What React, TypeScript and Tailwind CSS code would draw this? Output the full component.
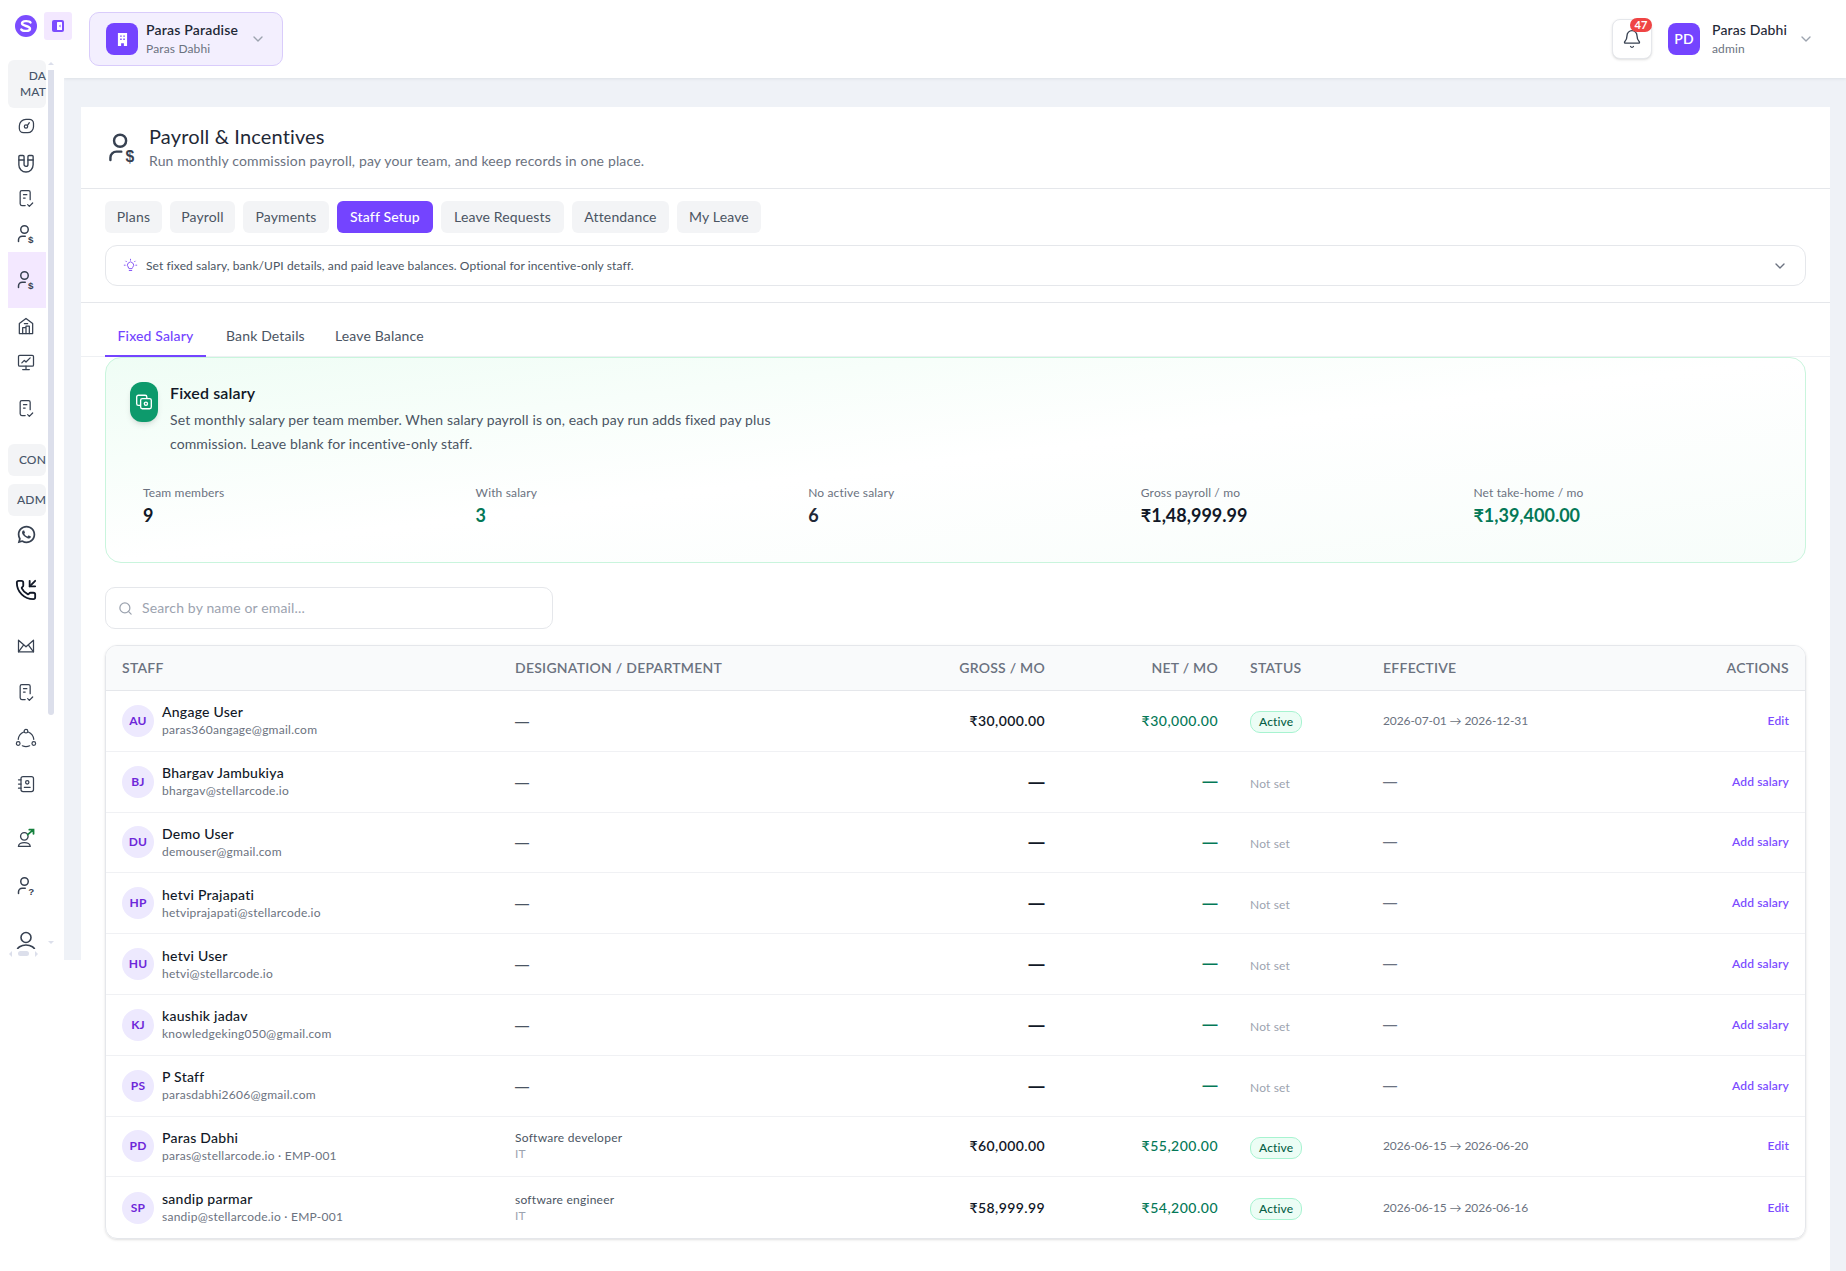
import type { ReactNode } from 'react';
import { Bell, ChevronDown, Magnet, PhoneIncoming, Search } from 'lucide-react';
import { RiWhatsappLine } from 'react-icons/ri';

function Ico({ children, className = 'w-5 h-5' }: { children: ReactNode; className?: string }) {
  return (
    <svg viewBox="0 0 24 24" fill="none" stroke="currentColor" strokeWidth="1.5" strokeLinecap="round" strokeLinejoin="round" className={className}>
      {children}
    </svg>
  );
}

function UserDollar({ className = 'w-[18px] h-[20px]' }: { className?: string }) {
  return (
    <svg viewBox="0 0 24 26" fill="none" stroke="currentColor" strokeWidth="2" strokeLinecap="round" className={className}>
      <circle cx="10" cy="7" r="5" />
      <path d="M2 23v-2a5 5 0 0 1 5-5h4" />
      <text x="14.5" y="25" fontSize="13" fontWeight="700" fill="currentColor" stroke="none" fontFamily="Liberation Sans, sans-serif">$</text>
    </svg>
  );
}

function DocCheck() {
  return (
    <Ico>
      <path d="M11 21H7a2 2 0 0 1-2-2V5a2 2 0 0 1 2-2h8a2 2 0 0 1 2 2v9" />
      <path d="M9 8h4M9 12h2M14 20l2 2 4-4" />
    </Ico>
  );
}

const navIcons: Record<string, ReactNode> = {
  gauge: (
    <Ico>
      <path d="M4 12a8 8 0 0 1 8-8h4a5 5 0 0 1 5 5v4a7 7 0 0 1-7 7h-5a5 5 0 0 1-5-5z" />
      <circle cx="12" cy="12.5" r="2" />
      <path d="M14 11l2-3" />
    </Ico>
  ),
  magnet: <Magnet className="w-[22px] h-[22px] rotate-[135deg]" strokeWidth={1.5} />,
  doc: <DocCheck />,
  user: <UserDollar />,
  home: (
    <Ico>
      <path d="M4 21V9l8-6 8 6v12z" />
      <path d="M8 21v-7h4v7M12 21v-9h4v9" />
      <path d="M10 9h4" />
    </Ico>
  ),
  monitor: (
    <Ico>
      <rect x="3" y="4" width="18" height="13" rx="1.5" />
      <path d="M8 21h8M12 17v4M7 13l3-3 2 2 5-5" />
    </Ico>
  ),
  whatsapp: <RiWhatsappLine className="w-[21px] h-[21px]" />,
  phone: <PhoneIncoming className="w-[22px] h-[22px] text-[#111827]" strokeWidth={2} />,
  mail: (
    <Ico>
      <path d="M3 5v14h18V5l-9 8z" />
      <path d="M3 19l6-8M21 19l-6-8" />
    </Ico>
  ),
  nodes: (
    <svg viewBox="0 0 24 24" fill="none" stroke="currentColor" strokeWidth="1.3" strokeLinecap="round" className="w-[22px] h-[22px]">
      <circle cx="12" cy="4.5" r="2" />
      <circle cx="3.5" cy="18" r="2" />
      <circle cx="20.5" cy="18" r="2" />
      <path d="M9.5 5.5A10 10 0 0 0 3.5 13.5M14.5 5.5a10 10 0 0 1 6 8M8 20.5a10 10 0 0 0 8 0" />
    </svg>
  ),
  contact: (
    <Ico>
      <rect x="6" y="3" width="15" height="18" rx="2.5" />
      <circle cx="13.5" cy="10" r="2" />
      <path d="M10 16h7M3 7h3M3 12h3M3 17h3" />
    </Ico>
  ),
  userArrow: (
    <svg viewBox="0 0 24 24" fill="none" stroke="currentColor" strokeWidth="1.6" strokeLinecap="round" className="w-5 h-5">
      <circle cx="10" cy="10" r="4.5" />
      <path d="M3 22a7 4.5 0 0 1 14 0zM3 22h14" />
      <path d="M14 8l7-6M16 2h5v5" stroke="#15803d" strokeWidth="2.2" />
    </svg>
  ),
  userHelp: (
    <svg viewBox="0 0 24 26" fill="none" stroke="currentColor" strokeWidth="2" strokeLinecap="round" className="w-[18px] h-[20px]">
      <circle cx="10" cy="7" r="5" />
      <path d="M2 23v-2a5 5 0 0 1 5-5h4" />
      <text x="15" y="25" fontSize="13" fontWeight="700" fill="currentColor" stroke="none" fontFamily="Liberation Sans, sans-serif">?</text>
    </svg>
  ),
  person: (
    <svg viewBox="0 0 24 24" fill="none" stroke="currentColor" strokeWidth="1.6" strokeLinecap="round" className="w-6 h-6">
      <circle cx="12" cy="7.5" r="5" />
      <path d="M3 21a9 6 0 0 1 18 0zM3 21h18" />
    </svg>
  ),
};

const tabs = [
  { label: 'Plans', width: 'w-[57px]' },
  { label: 'Payroll', width: 'w-[65px]' },
  { label: 'Payments', width: 'w-[86px]' },
  { label: 'Staff Setup', width: 'w-[96px]' },
  { label: 'Leave Requests', width: 'w-[123px]' },
  { label: 'Attendance', width: 'w-[97px]' },
  { label: 'My Leave', width: 'w-[84px]' },
];

const stats = [
  { label: 'Team members', value: '9', tone: 'text-[#111827]' },
  { label: 'With salary', value: '3', tone: 'text-[#047857]' },
  { label: 'No active salary', value: '6', tone: 'text-[#1f2937]' },
  { label: 'Gross payroll / mo', value: '₹1,48,999.99', tone: 'text-[#111827]' },
  { label: 'Net take-home / mo', value: '₹1,39,400.00', tone: 'text-[#047857]' },
];

interface Staff {
  initials: string;
  name: string;
  email: string;
  role?: string;
  dept?: string;
  gross?: string;
  net?: string;
  effective?: string;
}

const staff: Staff[] = [
  { initials: 'AU', name: 'Angage User', email: 'paras360angage@gmail.com', gross: '₹30,000.00', net: '₹30,000.00', effective: '2026-07-01 → 2026-12-31' },
  { initials: 'BJ', name: 'Bhargav Jambukiya', email: 'bhargav@stellarcode.io' },
  { initials: 'DU', name: 'Demo User', email: 'demouser@gmail.com' },
  { initials: 'HP', name: 'hetvi Prajapati', email: 'hetviprajapati@stellarcode.io' },
  { initials: 'HU', name: 'hetvi User', email: 'hetvi@stellarcode.io' },
  { initials: 'KJ', name: 'kaushik jadav', email: 'knowledgeking050@gmail.com' },
  { initials: 'PS', name: 'P Staff', email: 'parasdabhi2606@gmail.com' },
  { initials: 'PD', name: 'Paras Dabhi', email: 'paras@stellarcode.io · EMP-001', role: 'Software developer', dept: 'IT', gross: '₹60,000.00', net: '₹55,200.00', effective: '2026-06-15 → 2026-06-20' },
  { initials: 'SP', name: 'sandip parmar', email: 'sandip@stellarcode.io · EMP-001', role: 'software engineer', dept: 'IT', gross: '₹58,999.99', net: '₹54,200.00', effective: '2026-06-15 → 2026-06-16' },
];

function NavRow({ icon, className }: { icon: string; className: string }) {
  return <div className={`flex items-center justify-center pr-[2px] text-[#374151] ${className}`}>{navIcons[icon]}</div>;
}

function NavLabel({ text, className }: { text: string; className: string }) {
  return (
    <div className={`h-8 rounded-md bg-[#f3f4f6] flex items-center justify-end text-xs font-medium text-[#475569] whitespace-nowrap ${className}`}>
      {text}
    </div>
  );
}

function Sidebar() {
  return (
    <aside className="w-[64px] h-[960px] shrink-0 bg-white flex flex-col relative z-10">
      <div className="h-[60px] shrink-0 flex items-start pt-[12px] pl-[15px] gap-[7px]">
        <svg viewBox="0 0 22 22" className="w-[22px] h-[22px] mt-[3px] shrink-0">
          <circle cx="11" cy="11" r="11" fill="#7c4dff" />
          <path d="M15.5 7.5C14.5 5.8 7 5.4 7 8.3c0 3 8 2.4 8 5.4 0 3-7.5 2.6-8.7.8" fill="none" stroke="#fff" strokeWidth="2.4" strokeLinecap="round" />
        </svg>
        <div className="w-7 h-7 shrink-0 rounded-[3px] bg-[#f3e8ff] flex items-center justify-center">
          <svg viewBox="0 0 12 12" className="w-3 h-3">
            <rect width="12" height="12" rx="2" fill="#7c4dff" />
            <rect x="5" y="2" width="5" height="8" rx="0.5" fill="#fff" />
            <path d="M8.5 4.5L7 6l1.5 1.5z" fill="#7c4dff" />
          </svg>
        </div>
      </div>
      <div className="flex flex-1 min-h-0 overflow-hidden">
        <div className="ml-[8px] w-[38px] shrink-0 flex flex-col">
          <div className="h-[48px] shrink-0 rounded-md bg-[#f3f4f6] flex flex-col items-end justify-center text-xs leading-[16px] font-medium text-[#475569]">
            <span>DA</span>
            <span>MAT</span>
          </div>
          <NavRow icon="gauge" className="h-[36px] shrink-0" />
          <NavRow icon="magnet" className="h-[36px] shrink-0" />
          <NavRow icon="doc" className="h-[36px] shrink-0" />
          <NavRow icon="user" className="h-[36px] shrink-0" />
          <NavRow icon="user" className="h-[56px] shrink-0 bg-[#f3e8ff]" />
          <NavRow icon="home" className="h-[36px] shrink-0" />
          <NavRow icon="monitor" className="h-[36px] shrink-0" />
          <NavRow icon="doc" className="h-[56px] shrink-0" />
          <NavLabel text="CON" className="mt-[8px] shrink-0" />
          <NavLabel text="ADM" className="mt-[8px] shrink-0" />
          <NavRow icon="whatsapp" className="h-[36px] shrink-0" />
          <NavRow icon="phone" className="h-[76px] shrink-0" />
          <NavRow icon="mail" className="h-[36px] shrink-0" />
          <NavRow icon="doc" className="h-[56px] shrink-0" />
          <NavRow icon="nodes" className="h-[36px] shrink-0" />
          <NavRow icon="contact" className="h-[56px] shrink-0" />
          <NavRow icon="userArrow" className="h-[52px] shrink-0" />
          <NavRow icon="userHelp" className="h-[44px] shrink-0" />
          <NavRow icon="person" className="h-[68px] shrink-0" />
        </div>
        <div className="ml-[2px] w-[6px] shrink-0 flex flex-col items-center pt-[2px]">
          <div className="w-0 h-0 shrink-0 border-x-[3px] border-x-transparent border-b-[3px] border-b-[#dcdfeb]" />
          <div className="w-[6px] h-[645px] shrink-0 mt-[5px] rounded-b-[3px] bg-[#dcdfeb]" />
          <div className="w-0 h-0 shrink-0 mt-[226px] border-x-[3px] border-x-transparent border-t-[3px] border-t-[#dcdfeb]" />
        </div>
      </div>
      <div className="h-[9px] w-[46px] shrink-0 mb-[2px] flex items-center justify-center gap-[6px]">
        <div className="w-0 h-0 border-y-[3px] border-y-transparent border-r-[3px] border-r-[#dcdfeb]" />
        <div className="w-[11px] h-[5px] rounded-full bg-[#dcdfeb]" />
        <div className="w-0 h-0 border-y-[3px] border-y-transparent border-l-[3px] border-l-[#dcdfeb]" />
      </div>
    </aside>
  );
}

function Topbar() {
  return (
    <header className="h-[78px] shrink-0 bg-white flex items-center justify-between pl-[25px] pr-[32px] shadow-[0_1px_3px_rgba(15,23,42,0.08)] relative">
      <div className="w-[194px] h-[54px] rounded-[10px] bg-[#f3effe] border border-[#d9ccfb] flex items-center pl-[16px]">
        <div className="w-8 h-8 rounded-lg bg-[#7444ff] flex items-center justify-center">
          <svg viewBox="0 0 12 14" className="w-[11px] h-[13px]">
            <path d="M1 0h10v14H7.5v-3h-3v3H1z" fill="#fff" />
            <path d="M3.5 2.5h1.6v1.6H3.5zM6.9 2.5h1.6v1.6H6.9zM3.5 6h1.6v1.6H3.5zM6.9 6h1.6v1.6H6.9z" fill="#7444ff" />
          </svg>
        </div>
        <div className="ml-2 w-[100px]">
          <div className="text-sm leading-[18px] font-semibold text-[#1f2937] tracking-[0.2px]">Paras Paradise</div>
          <div className="mt-[1px] text-xs leading-[18px] text-[#6b7280]">Paras Dabhi</div>
        </div>
        <ChevronDown className="w-4 h-4 ml-[4px] text-[#9ca3af]" />
      </div>
      <div className="flex items-center">
        <div className="relative w-10 h-10 rounded-lg border border-[#e5e7eb] bg-white shadow-sm flex items-center justify-center">
          <Bell className="w-[20px] h-[20px] text-[#374151]" strokeWidth={1.6} />
          <span className="absolute -top-[2px] -right-[1px] h-[14px] w-[22px] rounded-full bg-[#ef4444] text-white text-[11px] leading-[14px] font-bold text-center">47</span>
        </div>
        <div className="ml-4 w-8 h-8 rounded-lg bg-[#7444ff] text-white text-sm font-semibold flex items-center justify-center">PD</div>
        <div className="ml-3 w-[86px]">
          <div className="text-sm leading-[18px] font-medium text-[#1f2937]">Paras Dabhi</div>
          <div className="mt-[1px] text-xs leading-[18px] text-[#6b7280]">admin</div>
        </div>
        <ChevronDown className="w-4 h-4 text-[#9ca3af]" />
      </div>
    </header>
  );
}

const gridCols = 'grid grid-cols-[393px_340px_222px_173px_133px_300px_1fr]';

function Dash({ className }: { className: string }) {
  return <span className={`font-[Inter,sans-serif] ${className}`}>—</span>;
}

function StaffRow({ s }: { s: Staff }) {
  return (
    <div className={`${gridCols} h-[60.8px] items-center border-b border-[#f0f1f4] last:border-b-0`}>
      <div className="flex items-center pl-4">
        <div className="w-8 h-8 rounded-full bg-[#ede9fe] text-[#6d28d9] text-xs font-bold flex items-center justify-center">{s.initials}</div>
        <div className="ml-2">
          <div className="text-sm leading-[19px] font-medium text-[#111827] tracking-[0.25px]">{s.name}</div>
          <div className="text-xs leading-[18px] text-[#6b7280] tracking-[0.25px]">{s.email}</div>
        </div>
      </div>
      <div className="pl-4">
        {s.role ? (
          <>
            <div className="text-xs leading-[16px] text-[#4b5563] tracking-[0.25px]">{s.role}</div>
            <div className="text-xs leading-[16px] text-[#9ca3af]">{s.dept}</div>
          </>
        ) : (
          <Dash className="text-sm text-[#4b5563]" />
        )}
      </div>
      <div className="pr-4 text-right text-sm font-semibold text-[#111827] tracking-[0.4px]">{s.gross ?? <Dash className="text-base" />}</div>
      <div className="pr-4 text-right text-sm font-medium text-[#047857] tracking-[0.5px]">{s.net ?? <Dash className="text-[15px]" />}</div>
      <div className="pl-4">
        {s.gross ? (
          <span className="inline-flex items-center h-[22px] px-[8px] rounded-[10px] bg-[#ecfdf5] border border-[#a7f3d0] text-xs font-medium text-[#065f46]">Active</span>
        ) : (
          <span className="text-xs text-[#9ca3af]">Not set</span>
        )}
      </div>
      <div className="pl-4 text-xs text-[#6b7280] tracking-[-0.1px]">{s.effective ?? <Dash className="text-sm" />}</div>
      <div className="pr-4 text-right text-xs font-semibold text-[#7c4dff]">{s.gross ? 'Edit' : 'Add salary'}</div>
    </div>
  );
}

export default function App() {
  return (
    <div className="w-[1846px] h-[1271px] overflow-hidden flex bg-white font-[Lato,sans-serif] tracking-[0.15px]">
      <Sidebar />
      <div className="flex-1 min-w-0 flex flex-col">
        <Topbar />
        <div className="flex-1 min-h-0 flex">
          <div className="w-[17px] h-[882px] shrink-0 bg-[#eff2f7]" />
          <div className="flex-1 min-w-0 flex flex-col">
            <div className="h-[29px] shrink-0 bg-[#eff2f7]" />
            <main className="flex-1 bg-white rounded-[10px] flex flex-col">
              <div className="h-[82px] shrink-0 flex items-center pl-[27px] border-b border-[#e5e7eb]">
                <UserDollar className="w-[29px] h-[32px] text-[#374151]" />
                <div className="ml-[12px]">
                  <h1 className="text-[20px] leading-[25px] -mt-[1px] text-[#1f2937]">Payroll &amp; Incentives</h1>
                  <p className="text-sm leading-[20px] mt-[2px] text-[#6b7280]">Run monthly commission payroll, pay your team, and keep records in one place.</p>
                </div>
              </div>

              <div className="flex gap-2 px-6 pt-[12px]">
                {tabs.map((t) => (
                  <button
                    key={t.label}
                    className={`h-8 rounded-md text-sm ${t.width} ${t.label === 'Staff Setup' ? 'bg-[#7444ff] text-white font-medium' : 'bg-[#f3f4f6] text-[#4b5563]'}`}
                  >
                    {t.label}
                  </button>
                ))}
              </div>

              <div className="mx-6 mt-3 h-[41px] shrink-0 rounded-xl border border-[#e5e7eb] flex items-center pl-[17px] pr-[17px]">
                <svg viewBox="0 0 24 24" fill="none" stroke="#8b5cf6" strokeWidth="1.6" strokeLinecap="round" className="w-[15px] h-[15px]">
                  <path d="M8.5 15a5 5 0 1 1 7 0c-.6.6-1 1.2-1 2h-5c0-.8-.4-1.4-1-2zM10 20h4M12 2v1.5M4.5 5l1 1M19.5 5l-1 1M2 11.5h1.5M20.5 11.5H22" />
                </svg>
                <span className="ml-[8px] text-xs text-[#4b5563] flex-1 tracking-[0.1px]">Set fixed salary, bank/UPI details, and paid leave balances. Optional for incentive-only staff.</span>
                <ChevronDown className="w-4 h-4 text-[#6b7280]" />
              </div>

              <div className="mt-4 h-[55px] shrink-0 border-t border-[#e5e7eb] border-b border-b-[#eef0f3] flex pl-6 items-end text-sm text-[#4b5563]">
                <div className="h-[31px] -mb-px w-[101px] border-b-2 border-[#7444ff] text-[#7444ff] font-medium text-center">Fixed Salary</div>
                <div className="h-[31px] -mb-px ml-[20px] w-[80px]">Bank Details</div>
                <div className="h-[31px] -mb-px ml-[29px]">Leave Balance</div>
              </div>

              <section className="mx-6 h-[206px] shrink-0 rounded-2xl border border-[#c9f5dd] bg-gradient-to-br from-[#effdf5] via-white to-[#f7fdfa] pt-[24px] pl-[24px] pr-[12px]">
                <div className="flex">
                  <div className="w-7 h-10 rounded-xl bg-[#0d9a6c] shadow-md flex items-center justify-center text-white">
                    <svg viewBox="0 0 16 16" fill="none" stroke="currentColor" strokeWidth="1.2" className="w-[18px] h-[18px]">
                      <rect x="1.5" y="2" width="9" height="9" rx="1.5" />
                      <rect x="5" y="5" width="9.5" height="9" rx="1.5" fill="#0d9a6c" />
                      <circle cx="9.7" cy="9.5" r="1.4" />
                    </svg>
                  </div>
                  <div className="ml-3 max-w-[640px] -mt-[1px]">
                    <h2 className="text-base leading-[24px] font-semibold text-[#111827]">Fixed salary</h2>
                    <p className="mt-[3px] text-sm leading-[24px] text-[#4b5563] tracking-[0.12px]">Set monthly salary per team member. When salary payroll is on, each pay run adds fixed pay plus commission. Leave blank for incentive-only staff.</p>
                  </div>
                </div>
                <div className="grid grid-cols-5 mt-[29px]">
                  {stats.map((st) => (
                    <div key={st.label} className="pl-[13px]">
                      <div className="text-xs leading-[16px] text-[#6b7280]">{st.label}</div>
                      <div className={`mt-[1px] text-lg leading-[26px] font-bold tracking-normal ${st.tone}`}>{st.value}</div>
                    </div>
                  ))}
                </div>
              </section>

              <div className="mx-6 mt-[24px] w-[448px] h-[42px] shrink-0 rounded-[10px] border border-[#e5e7eb] flex items-center pl-3">
                <Search className="w-[15px] h-[15px] text-[#9ca3af]" />
                <span className="ml-[9px] text-sm text-[#9ca3af]">Search by name or email...</span>
              </div>

              <div className="mx-6 mt-4 rounded-xl border border-[#e5e7eb] shadow-sm overflow-hidden shrink-0">
                <div className={`${gridCols} h-[45px] items-center bg-[#f9fafb] border-b border-[#e5e7eb] text-sm font-semibold uppercase text-[#6b7280] tracking-[0.25px]`}>
                  <div className="pl-4">Staff</div>
                  <div className="pl-4">Designation / Department</div>
                  <div className="pr-4 text-right">Gross / mo</div>
                  <div className="pr-4 text-right">Net / mo</div>
                  <div className="pl-4">Status</div>
                  <div className="pl-4">Effective</div>
                  <div className="pr-4 text-right">Actions</div>
                </div>
                {staff.map((s) => (
                  <StaffRow key={s.initials} s={s} />
                ))}
              </div>
            </main>
          </div>
          <div className="w-[16px] shrink-0 bg-[#eff2f7]" />
        </div>
      </div>
    </div>
  );
}
